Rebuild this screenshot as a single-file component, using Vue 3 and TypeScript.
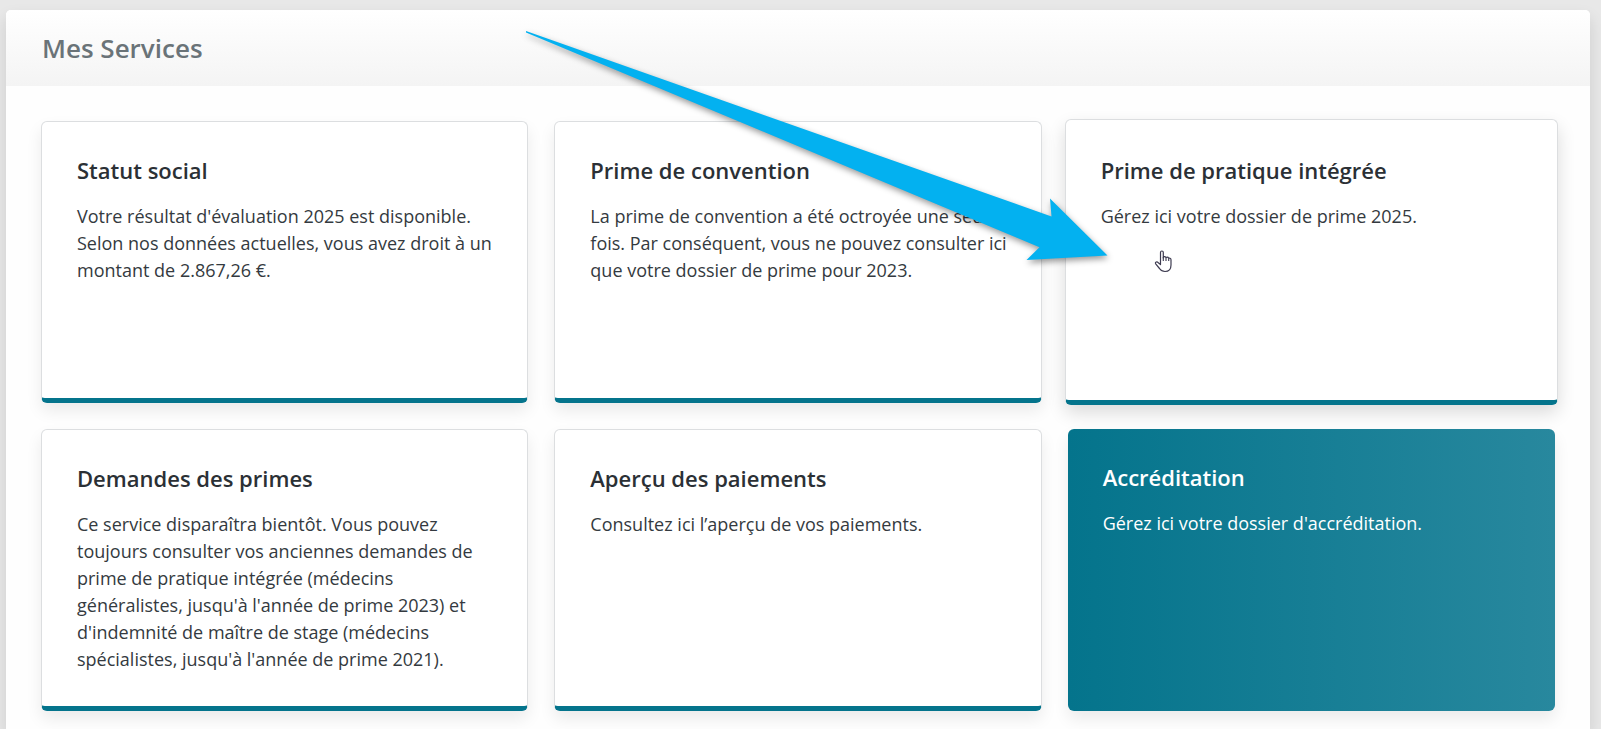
<script setup lang="ts">
interface Service {
  title: string
  text: string
  variant?: 'raised' | 'filled'
}

const services: Service[] = [
  {
    title: 'Statut social',
    text: "Votre résultat d'évaluation 2025 est disponible. Selon nos données actuelles, vous avez droit à un montant de 2.867,26 €.",
  },
  {
    title: 'Prime de convention',
    text: 'La prime de convention a été octroyée une seule fois. Par conséquent, vous ne pouvez consulter ici que votre dossier de prime pour 2023.',
  },
  {
    title: 'Prime de pratique intégrée',
    text: 'Gérez ici votre dossier de prime 2025.',
    variant: 'raised',
  },
  {
    title: 'Demandes des primes',
    text: "Ce service disparaîtra bientôt. Vous pouvez toujours consulter vos anciennes demandes de prime de pratique intégrée (médecins généralistes, jusqu'à l'année de prime 2023) et d'indemnité de maître de stage (médecins spécialistes, jusqu'à l'année de prime 2021).",
  },
  {
    title: 'Aperçu des paiements',
    text: 'Consultez ici l’aperçu de vos paiements.',
  },
  {
    title: 'Accréditation',
    text: "Gérez ici votre dossier d'accréditation.",
    variant: 'filled',
  },
]
</script>

<template>
  <div class="page">
    <main class="panel">
      <header class="panel-header">
        <h1>Mes Services</h1>
      </header>
      <div class="grid">
        <a
          v-for="service in services"
          :key="service.title"
          href="#"
          class="card"
          :class="service.variant"
        >
          <h2>{{ service.title }}</h2>
          <p>{{ service.text }}</p>
        </a>
      </div>
    </main>

    <svg class="arrow" viewBox="0 0 600 250" aria-hidden="true">
      <path d="M6 11 L531.5 196.5 L530 178.5 L587.5 235.5 L506.5 240 L519.5 227.3 L6 12.5 Z" fill="#03b1f0" />
    </svg>
    <svg class="pointer" viewBox="0 0 20 24" aria-hidden="true">
      <path
        d="M6.5 14.5 V2.5 Q6.5 1 7.9 1 Q9.3 1 9.3 2.5 V8 V6.9 Q11 6 12 7.5 Q14 6.7 14.7 8.2 Q17 7.7 17 10 V15 Q17 21.5 11 21.5 Q7.5 21.5 5.5 18.5 L1.7 13.8 Q1 12.5 2.2 12 Q3.3 11.7 4.3 12.7 Z"
        fill="#fff"
        stroke="#3d3b50"
        stroke-width="1.2"
        stroke-linejoin="round"
      />
      <path d="M9.3 7 V11 M12 7.5 V11 M14.7 8.2 V11" fill="none" stroke="#3d3b50" stroke-width="1.1" />
    </svg>
  </div>
</template>

<style>
body {
  margin: 0;
  background: #e8e8e8;
}
</style>

<style scoped>
.page {
  position: relative;
  box-sizing: border-box;
  min-height: 100vh;
  padding: 10px 11px 0 6px;
  display: flex;
  overflow: hidden;
  font-family: 'Open Sans', 'Noto Sans', sans-serif;
}

.panel {
  flex: 1;
  min-width: 0;
  background: #fefefe;
  border-radius: 5px 5px 0 0;
  box-shadow: 0 8px 16px rgba(0, 0, 0, 0.12);
}

.panel-header {
  padding: 20px 36px;
  border-radius: 5px 5px 0 0;
  background: linear-gradient(#ffffff, #f4f4f4);
}

h1 {
  margin: 0;
  font-size: 26px;
  line-height: 36px;
  font-weight: 600;
  color: #6a7378;
}

.grid {
  display: grid;
  grid-template-columns: repeat(3, minmax(0, 1fr));
  grid-auto-rows: minmax(282px, auto);
  gap: 26px;
  padding: 35px 35px 18px;
}

.card {
  box-sizing: border-box;
  padding: 33px 30px 26px 35px;
  border: 1px solid #dcdee0;
  border-bottom: 5px solid #04748c;
  border-radius: 6px;
  background: #fff;
  box-shadow: 0 8px 16px rgba(0, 0, 0, 0.08);
  color: #343a40;
  text-decoration: none;
}

.card.raised {
  margin: -2px -3px;
  padding-top: 35px;
  box-shadow: 0 8px 18px rgba(0, 0, 0, 0.14);
}

.card.filled {
  border: 0;
  background: linear-gradient(90deg, #04748c, #28889e);
  color: #fff;
}

h2 {
  margin: 0 0 18px;
  font-size: 22px;
  line-height: 30px;
  font-weight: 600;
  color: #2b3035;
}

.filled h2 {
  color: #fff;
}

p {
  margin: 0;
  font-size: 18px;
  line-height: 27px;
}

.arrow {
  position: absolute;
  left: 520px;
  top: 20px;
  width: 600px;
  height: 250px;
  filter: drop-shadow(1px 3px 3px rgba(0, 0, 0, 0.4));
  pointer-events: none;
}

.pointer {
  position: absolute;
  left: 1154px;
  top: 250px;
  width: 20px;
  height: 24px;
  pointer-events: none;
}
</style>
